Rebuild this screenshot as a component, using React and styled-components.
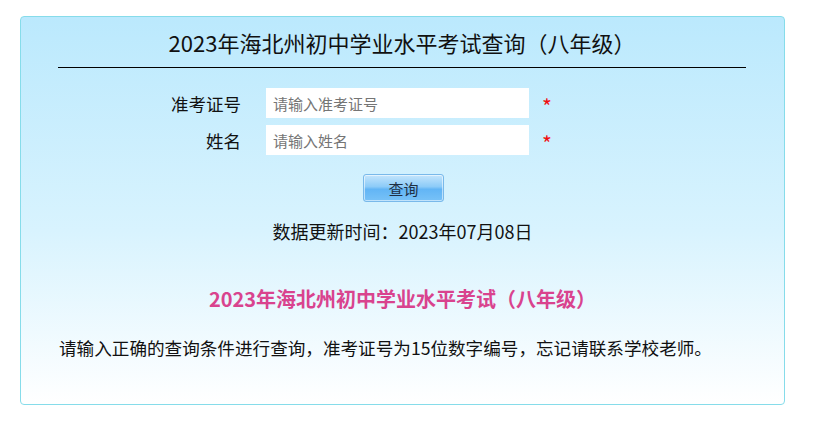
import styled, { createGlobalStyle } from "styled-components";

const GlobalStyle = createGlobalStyle`
  body {
    margin: 0;
    background: #ffffff;
    font-family: "Noto Sans CJK SC", "Noto Sans", sans-serif;
    color: #111;
  }
`;

const Page = styled.div`
  padding: 16px 0 0 20px;
`;

const Panel = styled.div`
  width: 763px;
  height: 387px;
  border: 1px solid #86dcea;
  border-radius: 4px;
  background: linear-gradient(to bottom, #bbe9fd 0%, #d8f3fe 55%, #ffffff 100%);
`;

const Title = styled.h1`
  margin: 0 38px 0 37px;
  height: 50px;
  line-height: 50px;
  border-bottom: 1px solid #000;
  text-align: center;
  font-size: 22px;
  font-weight: normal;
`;

const Form = styled.form`
  margin-top: 20px;
  display: flex;
  flex-direction: column;
  gap: 7px;
`;

const Row = styled.div`
  display: flex;
  align-items: center;
  height: 30px;
`;

const Label = styled.label`
  width: 220px;
  margin-right: 25px;
  text-align: right;
  font-size: 17.5px;
`;

const Input = styled.input`
  width: 263px;
  height: 30px;
  box-sizing: border-box;
  border: none;
  outline: none;
  padding: 0 7px;
  background: #fff;
  font-family: inherit;
  font-size: 15px;
  &::placeholder {
    color: #757575;
  }
`;

const Star = styled.span`
  margin-left: 13px;
  color: #f01010;
  font-size: 21px;
  line-height: 1;
  padding-top: 6px;
`;

const Actions = styled.div`
  display: flex;
  justify-content: center;
  margin-top: 12px;
  padding-left: 2px;
`;

const Button = styled.button`
  width: 81px;
  height: 28px;
  border: 1px solid #79b9ea;
  border-radius: 3px;
  background: linear-gradient(to bottom, #c4e5fc 0%, #8ccbf8 45%, #62b5f5 55%, #78c2f7 100%);
  box-shadow: inset 0 0 0 1px rgba(255, 255, 255, 0.55);
  font-family: inherit;
  font-size: 15px;
  color: #1f2f44;
  cursor: pointer;
`;

const Updated = styled.p`
  margin: 16px 0 0;
  text-align: center;
  font-size: 18px;
  line-height: 26px;
`;

const Notice = styled.h2`
  margin: 40px 0 0;
  text-align: center;
  font-size: 20px;
  line-height: 30px;
  font-weight: bold;
  color: #d9438e;
`;

const Text = styled.p`
  margin: 20px 0 0 38px;
  font-size: 17.6px;
  line-height: 28px;
`;

const App = () => {
  return (
    <Page>
      <GlobalStyle />
      <Panel>
        <Title>2023年海北州初中学业水平考试查询（八年级）</Title>
        <Form onSubmit={(e) => e.preventDefault()}>
          <Row>
            <Label>准考证号</Label>
            <Input placeholder="请输入准考证号" />
            <Star>*</Star>
          </Row>
          <Row>
            <Label>姓名</Label>
            <Input placeholder="请输入姓名" />
            <Star>*</Star>
          </Row>
          <Actions>
            <Button type="submit">查询</Button>
          </Actions>
        </Form>
        <Updated>数据更新时间：2023年07月08日</Updated>
        <Notice>2023年海北州初中学业水平考试（八年级）</Notice>
        <Text>请输入正确的查询条件进行查询，准考证号为15位数字编号，忘记请联系学校老师。</Text>
      </Panel>
    </Page>
  );
};

export default App;
